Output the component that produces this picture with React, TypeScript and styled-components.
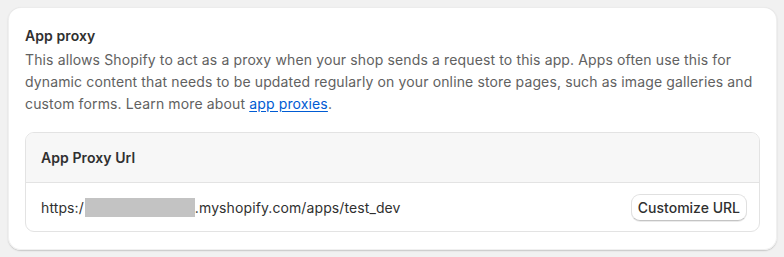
import React from "react";
import styled, { createGlobalStyle } from "styled-components";

const Global = createGlobalStyle`
  html, body { margin: 0; padding: 0; background: #f1f1f1; }
  body {
    font-family: Inter, "Noto Sans", "Liberation Sans", sans-serif;
    color: #303030;
    -webkit-font-smoothing: antialiased;
  }
`;

const Page = styled.div`
  padding: 7px 7px 8px 8px;
`;

const Card = styled.section`
  background: #ffffff;
  border-radius: 13px;
  box-shadow: 0 1px 0 0 rgba(26, 26, 26, 0.07), 0 1px 0 0 rgba(208, 208, 208, 0.4) inset,
    1px 0 0 0 #f0f0f0 inset, -1px 0 0 0 #f0f0f0 inset, 0 -1px 0 0 #f0f0f0 inset,
    0 1px 2px rgba(0, 0, 0, 0.12);
  padding: 18px 17px 18px 17px;
`;

const Title = styled.h2`
  margin: 0 0 2px 0;
  font-size: 14px;
  line-height: 22px;
  font-weight: 600;
  letter-spacing: 0.08px;
  color: #303030;
`;

const Description = styled.p`
  margin: 0;
  font-size: 14px;
  line-height: 22px;
  letter-spacing: 0.13px;
  color: #616161;
`;

const Link = styled.a`
  color: #005bd3;
  text-decoration: underline;
  text-underline-offset: 2px;
`;

const InnerBox = styled.div`
  margin-top: 17px;
  border: 1px solid #e3e3e3;
  border-radius: 9px;
  overflow: hidden;
`;

const InnerHeader = styled.div`
  background: #f7f7f7;
  height: 49px;
  padding: 0 15px;
  display: flex;
  align-items: center;
  border-bottom: 1px solid #e3e3e3;
  font-size: 14px;
  font-weight: 600;
  letter-spacing: 0.08px;
  color: #303030;
`;

const InnerRow = styled.div`
  height: 48px;
  padding: 0 12px 0 15px;
  display: flex;
  align-items: center;
  justify-content: space-between;
  font-size: 14px;
  letter-spacing: 0.1px;
  color: #303030;
`;

const Url = styled.span`
  display: inline-flex;
  align-items: center;
`;

const Redacted = styled.span`
  display: inline-block;
  width: 110px;
  height: 19px;
  margin-left: 1px;
  background: #c3c3c3;
`;

const Button = styled.button`
  font-family: inherit;
  font-size: 14px;
  font-weight: 550;
  color: #303030;
  background: #ffffff;
  border: 1px solid #e0e0e0;
  border-bottom-color: #c4c4c4;
  border-radius: 9px;
  height: 27px;
  padding: 0 6px;
  box-shadow: 0 1px 0 rgba(0, 0, 0, 0.08);
  cursor: pointer;
`;

export default function App() {
  return (
    <>
      <Global />
      <Page>
        <Card>
          <Title>App proxy</Title>
          <Description>
            This allows Shopify to act as a proxy when your shop sends a request to this app. Apps
            often use this for dynamic content that needs to be updated regularly on your online
            store pages, such as image galleries and custom forms. Learn more about{" "}
            <Link href="#">app proxies</Link>.
          </Description>
          <InnerBox>
            <InnerHeader>App Proxy Url</InnerHeader>
            <InnerRow>
              <Url>
                https:/
                <Redacted />
                .myshopify.com/apps/test_dev
              </Url>
              <Button>Customize URL</Button>
            </InnerRow>
          </InnerBox>
        </Card>
      </Page>
    </>
  );
}
